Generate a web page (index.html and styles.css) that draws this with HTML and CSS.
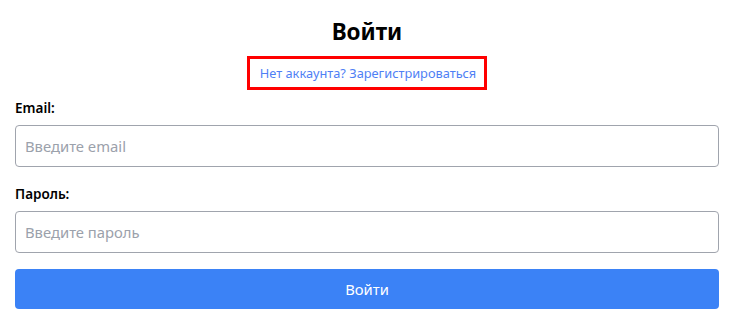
FILE: index.html
```html
<!DOCTYPE html>
<html lang="ru">
<head>
<meta charset="utf-8">
<title>Войти</title>
<link rel="stylesheet" href="styles.css">
</head>
<body>
<main class="login">
  <h1 class="login__title">Войти</h1>
  <div class="login__switch">
    <a class="login__link" href="#">Нет аккаунта? Зарегистрироваться</a>
  </div>
  <form class="login__form">
    <label class="field">
      <span class="field__label">Email:</span>
      <input class="field__input" type="email" placeholder="Введите email">
    </label>
    <label class="field">
      <span class="field__label">Пароль:</span>
      <input class="field__input" type="password" placeholder="Введите пароль">
    </label>
    <button class="login__submit" type="button">Войти</button>
  </form>
</main>
</body>
</html>
```
FILE: styles.css
```css
* { box-sizing: border-box; }
html, body { margin: 0; padding: 0; background: #fff; }
body {
  font-family: "Noto Sans", "Open Sans", sans-serif;
  color: #000;
}
.login {
  padding: 16px 11px 0 15px;
  display: flex;
  flex-direction: column;
}
.login__title {
  margin: 0;
  font-size: 22.5px;
  line-height: 32px;
  font-weight: 700;
  text-align: center;
}
.login__switch {
  display: flex;
  justify-content: center;
  margin-top: 8px;
}
.login__link {
  display: block;
  border: 3px solid #ff0000;
  padding: 4px 8px 4px 10px;
  font-size: 12.8px;
  line-height: 20px;
  color: #4f7ff5;
  text-decoration: none;
}
.login__form {
  display: flex;
  flex-direction: column;
  margin-top: 9px;
}
.field {
  display: flex;
  flex-direction: column;
  gap: 8px;
  margin-bottom: 18px;
}
.field__label {
  font-size: 13.5px;
  line-height: 18px;
  font-weight: 600;
}
.field__input {
  height: 42px;
  border: 1px solid #a0a4ad;
  border-radius: 4px;
  padding: 0 9px;
  font-family: inherit;
  font-size: 14.8px;
  color: #000;
}
.field__input::placeholder { color: #9ba1ab; }
.login__submit {
  height: 40px;
  margin-top: -2px;
  border: 0;
  border-radius: 4px;
  background: #3b82f6;
  color: #fff;
  font-family: inherit;
  font-size: 14.8px;
}
```
